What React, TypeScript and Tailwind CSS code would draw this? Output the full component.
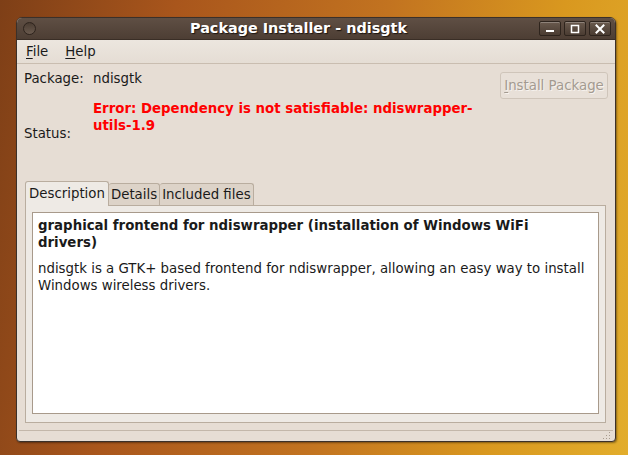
import React from 'react'

const font = { fontFamily: '"DejaVu Sans", "Noto Sans", sans-serif' }

function TitleButton({ kind }: { kind: 'min' | 'max' | 'close' }) {
  return (
    <div className="w-[22px] h-[15px] rounded-[2px] border border-[#2e241d] bg-gradient-to-b from-[#6a5a4e] to-[#4a3c32] shadow-[inset_0_1px_0_rgba(255,255,255,0.25)] flex items-center justify-center">
      <svg width="12" height="10" viewBox="0 0 12 10">
        {kind === 'min' && <rect x="2" y="6" width="8" height="2" fill="#fff" />}
        {kind === 'max' && <rect x="2.5" y="1.5" width="7" height="7" fill="none" stroke="#fff" strokeWidth="1.5" />}
        {kind === 'close' && (
          <path d="M2.5 1.5 L9.5 8.5 M9.5 1.5 L2.5 8.5" stroke="#fff" strokeWidth="2" strokeLinecap="square" />
        )}
      </svg>
    </div>
  )
}

export default function App() {
  return (
    <div
      className="w-[628px] h-[455px] overflow-hidden pl-[16px] pt-[17px] bg-[linear-gradient(100deg,#7e3f17_0%,#a9561c_25%,#c27320_55%,#d9981f_80%,#e2ad2c_100%)]"
      style={font}
    >
      <div className="w-[600px] h-[425px] flex flex-col rounded-t-[6px] rounded-b-[4px] bg-[#e6ddd4] border border-[#3b3029] shadow-[1px_1px_2px_rgba(0,0,0,0.4)] overflow-hidden">
        {/* title bar */}
        <div className="h-[22px] shrink-0 flex items-center px-[6px] bg-gradient-to-b from-[#5f4f44] to-[#4d3e34] border-b border-[#3a2e26]">
          <div className="w-[13px] h-[13px] rounded-full border border-[#2e241d] bg-gradient-to-b from-[#4a3c32] to-[#6a5a4e]" />
          <div className="flex-1 text-center text-white font-bold text-[14.4px] leading-none pl-[22px] [text-shadow:1px_1px_1px_#1d1510]">
            Package Installer - ndisgtk
          </div>
          <div className="flex gap-[3px] -mr-[2px]">
            <TitleButton kind="min" />
            <TitleButton kind="max" />
            <TitleButton kind="close" />
          </div>
        </div>

        {/* menu bar */}
        <div className="h-[24px] shrink-0 flex items-center gap-[17px] px-[9px] text-[13.33px] text-[#1a1a1a] bg-gradient-to-b from-[#ece6df] to-[#e5ddd4] border-b border-[#c9bdb0]">
          <span>
            <span className="underline underline-offset-2">F</span>ile
          </span>
          <span>
            <span className="underline underline-offset-2">H</span>elp
          </span>
        </div>

        {/* body */}
        <div className="flex-1 flex flex-col px-[8px] pt-[6px] text-[13.33px] text-[#1a1a1a]">
          <div className="flex">
            <div className="w-[69px] flex flex-col -ml-[1px]">
              <div className="h-[18px] leading-[18px]">Package:</div>
              <div className="mt-[37px] h-[18px] leading-[18px]">Status:</div>
            </div>
            <div className="flex-1 flex flex-col">
              <div className="h-[18px] leading-[18px]">ndisgtk</div>
              <div className="mt-[12px] font-bold text-[#ff0000] leading-[17px]">
                Error: Dependency is not satisfiable: ndiswrapper-
                <br />
                utils-1.9
              </div>
            </div>
            <div className="w-[108px] h-[27px] mt-[2px] -mr-[1px] rounded-[3px] border border-[#cfc5ba] bg-[#e8e0d8] flex items-center justify-center text-[#a39a90] [text-shadow:1px_1px_0_#f6f2ee]">
              <span>
                <span className="underline underline-offset-2">I</span>nstall Package
              </span>
            </div>
          </div>

          {/* notebook */}
          <div className="mt-[38px] flex flex-col mr-[1px]">
            <div className="flex items-end h-[24px]">
              <div className="h-[25px] -mb-[1px] px-[3px] flex items-center rounded-t-[3px] border border-b-0 border-[#b9ad9f] bg-[#eeeae5] z-10">
                Description
              </div>
              <div className="h-[22px] px-[2px] flex items-center rounded-t-[3px] border border-l-0 border-b-0 border-[#b9ad9f] bg-[#ddd3c8]">
                Details
              </div>
              <div className="h-[22px] px-[2px] flex items-center rounded-t-[3px] border border-l-0 border-b-0 border-[#b9ad9f] bg-[#ddd3c8]">
                Included files
              </div>
            </div>
            <div className="h-[218px] border border-[#b9ad9f] bg-[#eeeae5] px-[6px] pt-[6px] pb-[8px]">
              <div className="h-full border border-[#a89a8b] bg-white px-[5px] pt-[4px]">
                <div className="font-bold leading-[17px]">
                  graphical frontend for ndiswrapper (installation of Windows WiFi
                  <br />
                  drivers)
                </div>
                <div className="mt-[9px] leading-[17px]">
                  ndisgtk is a GTK+ based frontend for ndiswrapper, allowing an easy way to install
                  <br />
                  Windows wireless drivers.
                </div>
              </div>
            </div>
          </div>

          <div className="flex-1" />
        </div>

        {/* status bar */}
        <div className="h-[11px] shrink-0 border-t border-[#c3b7aa] mx-[2px] flex justify-end items-end pr-[2px] pb-[1px]">
          <svg width="10" height="10" viewBox="0 0 10 10">
            {[
              [8, 2], [8, 5], [5, 5], [8, 8], [5, 8], [2, 8],
            ].map(([x, y], i) => (
              <rect key={i} x={x} y={y} width="1" height="1" fill="#a89b8d" />
            ))}
          </svg>
        </div>
      </div>
    </div>
  )
}
